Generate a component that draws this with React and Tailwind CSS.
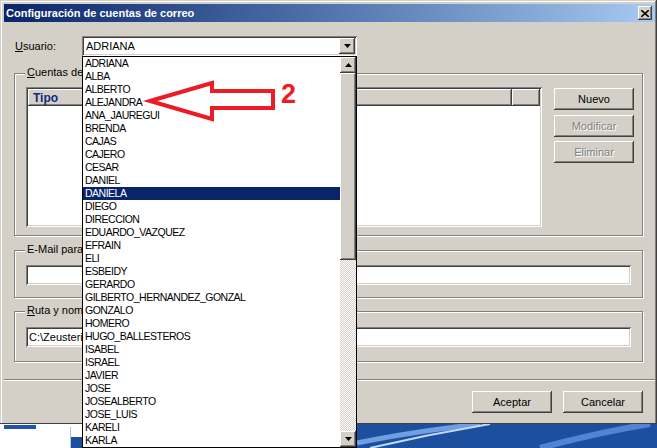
import React from 'react';

const users = [
  'ADRIANA', 'ALBA', 'ALBERTO', 'ALEJANDRA', 'ANA_JAUREGUI', 'BRENDA', 'CAJAS', 'CAJERO',
  'CESAR', 'DANIEL', 'DANIELA', 'DIEGO', 'DIRECCION', 'EDUARDO_VAZQUEZ', 'EFRAIN', 'ELI',
  'ESBEIDY', 'GERARDO', 'GILBERTO_HERNANDEZ_GONZAL', 'GONZALO', 'HOMERO', 'HUGO_BALLESTEROS',
  'ISABEL', 'ISRAEL', 'JAVIER', 'JOSE', 'JOSEALBERTO', 'JOSE_LUIS', 'KARELI', 'KARLA',
];

const raised =
  'shadow-[inset_-1px_-1px_#404040,inset_1px_1px_#ffffff,inset_-2px_-2px_#808080,inset_2px_2px_#d4d0c8]';
const sunken =
  'shadow-[inset_1px_1px_#808080,inset_-1px_-1px_#ffffff,inset_2px_2px_#404040,inset_-2px_-2px_#d4d0c8]';
const etched = 'border border-[#808080] shadow-[inset_1px_1px_#ffffff,1px_1px_#ffffff]';

// small black triangle used by combo & scroll buttons
const Tri = ({ up }) => (
  <svg width="7" height="4" viewBox="0 0 7 4">
    <path d={up ? 'M3.5 0 L7 4 L0 4 Z' : 'M0 0 L7 0 L3.5 4 Z'} fill="#000" />
  </svg>
);

const Button = ({ children, disabled, className = '' }) => (
  <div
    className={`flex items-center justify-center bg-[#d4d0c8] w-[80px] h-[22px] ${raised} ${
      disabled ? 'text-[#808080] [text-shadow:1px_1px_0_#ffffff]' : 'text-black'
    } ${className}`}
  >
    {children}
  </div>
);

// label sits on the group border; the open list hides the rest of it
const GroupLabel = ({ children }) => (
  <span className="absolute -top-[8px] left-[10px] pl-[2px] bg-[#d4d0c8] leading-[13px] text-black whitespace-nowrap">
    {children}
  </span>
);

const App = () => {
  return (
    <div className="relative w-[657px] h-[448px] bg-white overflow-hidden font-['Liberation_Sans',Arial,sans-serif] text-[11px]">
      {/* Dialog window */}
      <div className="h-[424px] bg-[#d4d0c8] pt-[4px] pl-[4px] pr-[2px] flex flex-col shadow-[inset_-1px_-1px_#404040,inset_1px_1px_#d4d0c8,inset_-2px_0_#808080,inset_2px_2px_#ffffff]">
        {/* Title bar */}
        <div className="h-[18px] flex items-center justify-between pl-[2px] pr-[3px] bg-gradient-to-r from-[#0a246a] to-[#a6caf0]">
          <span className="text-white font-bold text-[11px] leading-none">Configuración de cuentas de correo</span>
          <div className={`w-[14px] h-[14px] bg-[#d4d0c8] flex items-center justify-center ${raised}`}>
            <svg width="8" height="7" viewBox="0 0 8 7">
              <path d="M0 0 L8 7 M8 0 L0 7" stroke="#000" strokeWidth="1.6" />
            </svg>
          </div>
        </div>

        {/* Body */}
        <div className="flex flex-col pl-[10px] pr-[12px]">
          {/* Usuario */}
          <div className="mt-[14px] flex items-center h-[20px]">
            <span className="w-[68px] pl-[1px]">
              <span className="underline">U</span>suario:
            </span>
            <div className={`w-[275px] h-[20px] bg-white flex items-center justify-between pl-[4px] pr-[2px] ${sunken}`}>
              <span>ADRIANA</span>
              <div className={`w-[16px] h-[16px] bg-[#d4d0c8] flex items-center justify-center ${raised}`}>
                <Tri />
              </div>
            </div>
          </div>

          {/* Cuentas de correo */}
          <div className={`relative mt-[17px] h-[163px] ${etched} flex pl-[11px] pt-[13px]`}>
            <GroupLabel>
              <span className="underline">C</span>uentas de
            </GroupLabel>
            <div className={`w-[516px] h-[140px] bg-white p-[2px] ${sunken}`}>
              <div className="flex h-[17px]">
                <div className={`w-[484px] bg-[#d4d0c8] pl-[5px] flex items-center font-bold text-[#0f2a80] text-[12px] ${raised}`}>
                  Tipo
                </div>
                <div className={`w-[28px] bg-[#d4d0c8] ${raised}`} />
              </div>
            </div>
            <div className="ml-[12px] mt-[1px] flex flex-col">
              <Button className="mb-[5px]">Nuevo</Button>
              <Button disabled className="mb-[4px]">Modificar</Button>
              <Button disabled>Eliminar</Button>
            </div>
          </div>

          {/* E-Mail */}
          <div className={`relative mt-[14px] h-[48px] ${etched} pl-[11px] pt-[14px]`}>
            <GroupLabel>E-Mail para</GroupLabel>
            <div className={`w-[605px] h-[20px] bg-white ${sunken}`} />
          </div>

          {/* Ruta */}
          <div className={`relative mt-[13px] h-[51px] ${etched} pl-[11px] pt-[15px]`}>
            <GroupLabel>
              <span className="underline">R</span>uta y nom
            </GroupLabel>
            <div className={`w-[605px] h-[20px] bg-white flex items-center pl-[3px] ${sunken}`}>
              C:\Zeusteri
            </div>
          </div>

          {/* separator */}
          <div className="mt-[17px] -ml-[10px] -mr-[12px] h-[2px] border-t border-[#808080] border-b border-b-white" />

          <div className="mt-[10px] flex justify-end gap-[11px]">
            <Button>Aceptar</Button>
            <Button>Cancelar</Button>
          </div>
        </div>
      </div>

      {/* Desktop below the dialog */}
      <div className="flex h-[24px]">
        <div className="w-[70px] pt-[1px] pl-[4px]">
          <div className="w-[32px] h-[4px] bg-[#1f55a8]" />
        </div>
        <svg width="587" height="24" viewBox="0 0 587 24">
          <rect x="1" y="0" width="586" height="24" fill="#1d4f9f" />
          <rect x="1" y="0" width="11" height="13" fill="#ffffff" />
          <line x1="0.5" y1="3" x2="0.5" y2="24" stroke="#a9c8f0" />
          <path d="M287 19 Q340 8 410 0" stroke="#6f9fe0" strokeWidth="5" fill="none" />
          <path d="M300 24 Q360 10 420 0" stroke="#c4d9f5" strokeWidth="2" fill="none" />
          <path d="M470 24 Q530 8 580 0" stroke="#4f86d4" strokeWidth="6" fill="none" />
        </svg>
      </div>

      {/* Open dropdown list */}
      <div className="absolute left-[82px] top-[56px] w-[275px] h-[392px] border border-black bg-white flex">
        <div className="flex-1 flex flex-col">
          {users.map((u) => (
            <div
              key={u}
              className={`h-[13px] leading-[13px] pl-[2px] text-[10.5px] tracking-[-0.5px] whitespace-nowrap ${
                u === 'DANIELA' ? 'bg-[#0a246a] text-white' : 'text-black'
              }`}
            >
              {u}
            </div>
          ))}
        </div>
        <div className="w-[16px] flex flex-col">
          <div className={`h-[16px] bg-[#d4d0c8] flex items-center justify-center ${raised}`}>
            <Tri up />
          </div>
          <div className={`h-[187px] bg-[#d4d0c8] ${raised}`} />
          <div className="flex-1 bg-[repeating-conic-gradient(#d4d0c8_0_25%,#ffffff_0_50%)] bg-[length:2px_2px]" />
          <div className={`h-[16px] bg-[#d4d0c8] flex items-center justify-center ${raised}`}>
            <Tri />
          </div>
        </div>
      </div>

      {/* Annotation arrow */}
      <svg className="absolute left-0 top-0 pointer-events-none" width="657" height="448">
        <path
          d="M150 101 L212 83 L212 91 L273 91 L273 108 L212 108 L212 119 Z"
          stroke="#ed1c24"
          strokeWidth="4"
          fill="none"
          strokeLinejoin="miter"
        />
      </svg>
      <span className="absolute left-[281px] top-[81px] text-[27px] leading-none font-bold text-[#ed1c24]">2</span>
    </div>
  );
};

export default App;
